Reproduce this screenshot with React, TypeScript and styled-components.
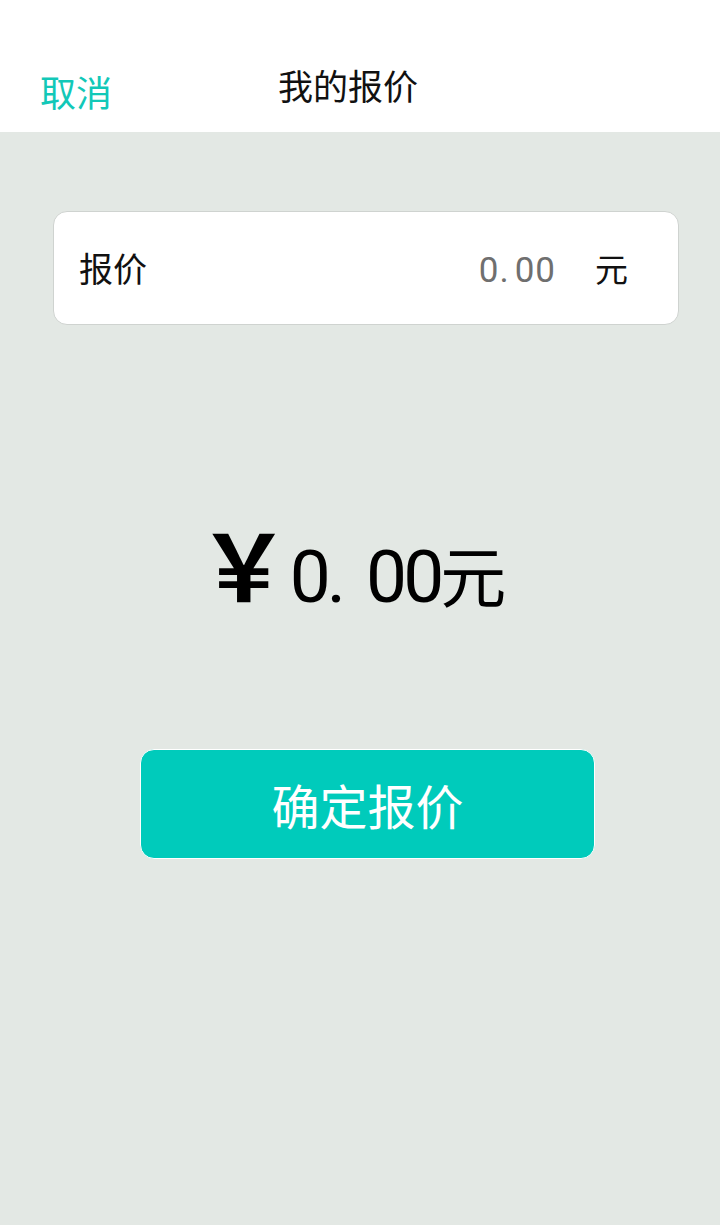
import React from "react";
import styled, { createGlobalStyle } from "styled-components";

const GlobalStyle = createGlobalStyle`
  html, body {
    margin: 0;
    padding: 0;
    background: #e3e8e4;
  }
  body {
    font-family: "Noto Sans CJK SC", "Noto Sans", sans-serif;
  }
  * { box-sizing: border-box; }
`;

const Page = styled.div`
  width: 720px;
  min-height: 1225px;
  display: flex;
  flex-direction: column;
  background: #e3e8e4;
`;

const Header = styled.header`
  height: 132px;
  background: #ffffff;
  display: grid;
  grid-template-columns: 238px auto 1fr;
  align-items: start;
  padding: 67px 0 0 40px;
`;

const Cancel = styled.button`
  border: none;
  background: none;
  padding: 0;
  margin-top: 6px;
  justify-self: start;
  font-family: "Noto Sans CJK SC", sans-serif;
  font-size: 36px;
  line-height: 1;
  color: #12c8b8;
  cursor: pointer;
`;

const Title = styled.h1`
  margin: 0;
  font-size: 35px;
  font-weight: 400;
  line-height: 1;
  color: #111111;
`;

const Main = styled.main`
  flex: 1;
  display: flex;
  flex-direction: column;
  padding-top: 79px;
`;

const Card = styled.div`
  margin: 0 41px 0 53px;
  height: 114px;
  background: #ffffff;
  border: 1px solid #cfd3d0;
  border-radius: 14px;
  display: flex;
  align-items: center;
  padding: 0 50px 0 25px;
`;

const Label = styled.span`
  font-size: 34px;
  line-height: 1;
  color: #111111;
  flex: 1;
`;

const Value = styled.span`
  font-family: "Roboto", "Liberation Sans", sans-serif;
  font-size: 35px;
  line-height: 1;
  color: #6f6f6f;
  letter-spacing: 1px;
  margin-top: 4px;
`;

const Dot = styled.span<{ $gap: number }>`
  margin-right: ${(p) => p.$gap}px;
`;

const Unit = styled.span`
  margin-left: 39px;
  font-size: 33px;
  line-height: 1;
  color: #111111;
`;

const Amount = styled.div`
  margin-top: 191px;
  display: flex;
  justify-content: center;
  align-items: baseline;
  padding-right: 16px;
  color: #000000;
`;

const Yen = styled.span`
  font-family: "Noto Sans CJK SC", sans-serif;
  font-weight: 700;
  font-size: 92px;
  line-height: 1;
`;

const Digits = styled.span`
  font-family: "Roboto", "Liberation Sans", sans-serif;
  font-size: 73px;
  line-height: 1;
  letter-spacing: -4px;
`;

const BigUnit = styled.span`
  font-family: "Noto Sans CJK SC", sans-serif;
  font-size: 66px;
  line-height: 1;
`;

const Confirm = styled.button`
  margin: 135px 0 0 140px;
  width: 455px;
  height: 110px;
  border: 1px solid #ffffff;
  border-radius: 14px;
  background: #00cbbb;
  color: #ffffff;
  font-family: "Noto Sans CJK SC", sans-serif;
  font-size: 48px;
  line-height: 1;
  cursor: pointer;
  padding: 0;
`;

export default function App() {
  return (
    <>
      <GlobalStyle />
      <Page>
        <Header>
          <Cancel>取消</Cancel>
          <Title>我的报价</Title>
        </Header>
        <Main>
          <Card>
            <Label>报价</Label>
            <Value>
              0<Dot $gap={5}>.</Dot>00
            </Value>
            <Unit>元</Unit>
          </Card>
          <Amount>
            <Yen>￥</Yen>
            <Digits>
              0<Dot $gap={24}>.</Dot>00
            </Digits>
            <BigUnit>元</BigUnit>
          </Amount>
          <Confirm>确定报价</Confirm>
        </Main>
      </Page>
    </>
  );
}
